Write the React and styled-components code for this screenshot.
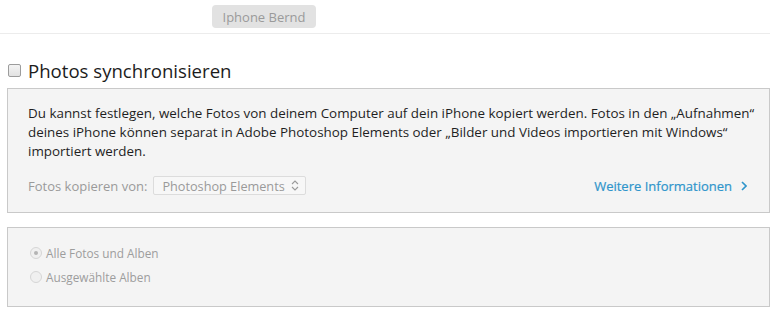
import React from 'react';
import styled, {createGlobalStyle} from 'styled-components';

const Global = createGlobalStyle`
    body {
        margin: 0;
        background: #ffffff;
        font-family: "Open Sans", "Noto Sans", sans-serif;
    }
`;

const Styled = {
    Root: styled.div`
        width: 772px;
        height: 310px;
        overflow: hidden;
    `,
    Header: styled.div`
        height: 34px;
        border-bottom: 1px solid #ececec;
        margin-right: 2px;
        box-sizing: border-box;
        display: flex;
        align-items: flex-start;
        padding: 5px 0 0 212px;
    `,
    DeviceButton: styled.div`
        width: 104px;
        height: 23px;
        border-radius: 4px;
        background: #e2e2e2;
        color: #9a9a9a;
        font-size: 13px;
        display: flex;
        align-items: center;
        justify-content: center;
    `,
    TitleRow: styled.label`
        display: flex;
        align-items: center;
        gap: 7px;
        margin-top: 19px;
        height: 34px;
        padding-left: 8px;
        font-size: 18.6px;
        color: #1c1c1c;
    `,
    Check: styled.span`
        width: 11px;
        height: 11px;
        border: 1px solid #9c9c9c;
        border-radius: 2px;
        background: linear-gradient(#f4f4f4, #e2e2e2);
    `,
    Panel: styled.div`
        margin: ${p => p.$top || 0}px 2px 0 7px;
        height: ${p => p.$height}px;
        box-sizing: border-box;
        border: 1px solid #c9c9c9;
        background: #f4f4f4;
        padding: ${p => p.$pad};
        display: flex;
        flex-direction: column;
    `,
    Info: styled.p`
        margin: 0;
        font-size: 13.4px;
        line-height: 19px;
        color: #1f1f1f;
        white-space: nowrap;
    `,
    CopyRow: styled.div`
        display: flex;
        align-items: center;
        margin-top: 15px;
        font-size: 13px;
        color: #9a9a9a;
    `,
    Select: styled.div`
        margin-left: 6px;
        height: 19px;
        width: 153px;
        box-sizing: border-box;
        border: 1px solid #dcdcdc;
        border-radius: 2px;
        background: #f7f7f7;
        display: flex;
        align-items: center;
        justify-content: space-between;
        padding: 0 6px 0 8px;
        font-size: 12.7px;
        color: #9a9a9a;
    `,
    Link: styled.a`
        margin-left: auto;
        margin-right: 12px;
        display: flex;
        align-items: center;
        gap: 9px;
        color: #2f95cb;
        font-size: 13px;
        text-decoration: none;
        -webkit-text-stroke: 0.2px #2f95cb;
    `,
    Radio: styled.label`
        display: flex;
        align-items: center;
        gap: 4px;
        height: 24px;
        font-size: 11.8px;
        color: #9d9d9d;
    `,
    Dot: styled.span`
        width: 10px;
        height: 10px;
        border-radius: 50%;
        border: 1px solid #d6d6d6;
        background: #f0f0f0;
        display: flex;
        align-items: center;
        justify-content: center;
        &::after {
            content: '';
            width: 4px;
            height: 4px;
            border-radius: 50%;
            background: ${p => p.$on ? '#b4b4b4' : 'transparent'};
        }
    `
};

const Updown = () => (
    <svg width="8" height="11" viewBox="0 0 8 11" fill="none" stroke="#9a9a9a" strokeWidth="1.1">
        <path d="M1 4 L4 1 L7 4" />
        <path d="M1 7 L4 10 L7 7" />
    </svg>
);

const Chevron = () => (
    <svg width="6" height="10" viewBox="0 0 6 10" fill="none" stroke="#2f95cb" strokeWidth="1.6">
        <path d="M1 1 L5 5 L1 9" />
    </svg>
);

const App = () => (
    <Styled.Root>
        <Global />
        <Styled.Header>
            <Styled.DeviceButton>Iphone Bernd</Styled.DeviceButton>
        </Styled.Header>
        <Styled.TitleRow>
            <Styled.Check />
            Photos synchronisieren
        </Styled.TitleRow>
        <Styled.Panel $top={1} $height={125} $pad="15px 10px 0 20px">
            <Styled.Info>
                Du kannst festlegen, welche Fotos von deinem Computer auf dein iPhone kopiert werden. Fotos in den „Aufnahmen“<br />
                deines iPhone können separat in Adobe Photoshop Elements oder „Bilder und Videos importieren mit Windows“<br />
                importiert werden.
            </Styled.Info>
            <Styled.CopyRow>
                Fotos kopieren von:
                <Styled.Select>
                    Photoshop Elements
                    <Updown />
                </Styled.Select>
                <Styled.Link href="#">
                    Weitere Informationen
                    <Chevron />
                </Styled.Link>
            </Styled.CopyRow>
        </Styled.Panel>
        <Styled.Panel $top={14} $height={80} $pad="13px 0 0 22px">
            <Styled.Radio>
                <Styled.Dot $on />
                Alle Fotos und Alben
            </Styled.Radio>
            <Styled.Radio>
                <Styled.Dot />
                Ausgewählte Alben
            </Styled.Radio>
        </Styled.Panel>
    </Styled.Root>
);

export default App;
